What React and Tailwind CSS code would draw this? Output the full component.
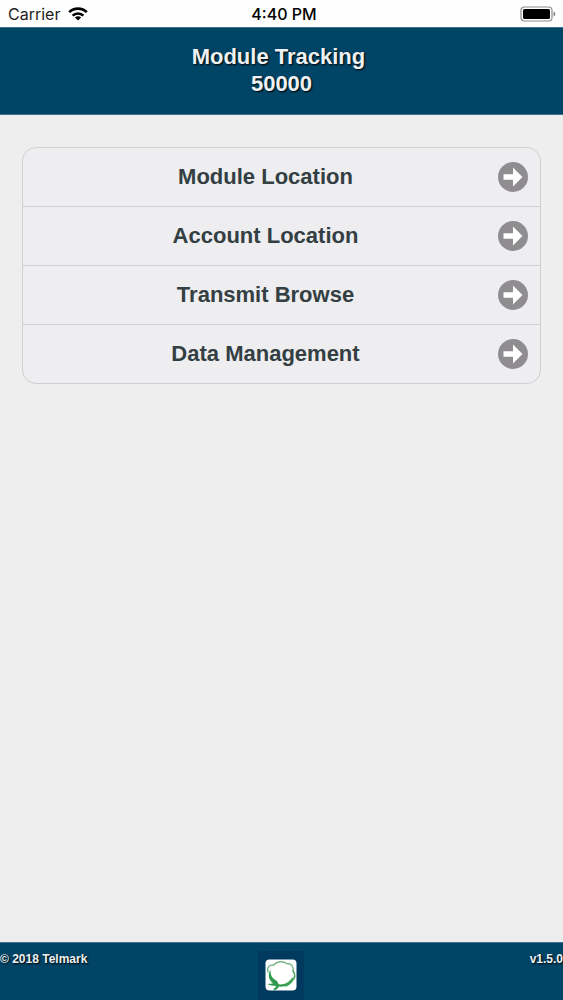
const menuItems = [
  { label: "Module Location", href: "#module-location" },
  { label: "Account Location", href: "#account-location" },
  { label: "Transmit Browse", href: "#transmit-browse" },
  { label: "Data Management", href: "#data-management" },
];

function WifiIcon() {
  return (
    <svg viewBox="0 0 20 14" className="h-[14px] w-[20px]" fill="none" stroke="#000" strokeWidth="2.6" aria-hidden="true">
      <path d="M1.2 5.2C6 0.4 14 0.4 18.8 5.2" />
      <path d="M4.6 8.6C7.6 5.7 12.4 5.7 15.4 8.6" />
      <path d="M10 13.6L6.9 10.5C8.6 8.9 11.4 8.9 13.1 10.5Z" fill="#000" stroke="none" />
    </svg>
  );
}

function BatteryIcon() {
  return (
    <svg viewBox="0 0 36 16" className="h-[16px] w-[36px]" aria-hidden="true">
      <rect x="1" y="1" width="31" height="14" rx="3.5" fill="#fff" stroke="#8c8c8c" strokeWidth="1.2" />
      <rect x="3" y="3" width="27" height="10" rx="1.5" fill="#000" />
      <path d="M33.6 5.5C35.8 6.4 35.8 9.6 33.6 10.5Z" fill="#777" />
    </svg>
  );
}

function ArrowIcon() {
  return (
    <svg viewBox="0 0 30 30" className="h-[30px] w-[30px] shrink-0" aria-hidden="true">
      <circle cx="15" cy="15" r="15" fill="#8f8d8f" />
      <path d="M5.5 12.2H15V5.5L24.5 15L15 24.5V17.8H5.5Z" fill="#fff" />
    </svg>
  );
}

function CottonLogo() {
  return (
    <svg viewBox="0 0 32 32" className="h-8 w-8" aria-hidden="true">
      <rect x="0.5" y="0.5" width="31" height="31" rx="4" fill="#fff" />
      <g fill="none" strokeLinecap="round">
        <path d="M3 13C1.5 8.5 4.5 5.5 9 6C11.5 2 18.5 1.8 21.5 4.5C26 4 29 7.5 28 12" stroke="#7ab588" strokeWidth="1.4" />
        <path d="M28 12C31 15.5 30 19.5 27 22" stroke="#4ba563" strokeWidth="1.6" />
      </g>
      <path d="M5.5 10.5C5.2 16.5 7.5 19.5 10.5 21C12.3 22 13 23.6 13.4 25.3C19 26 24 24 27 18.5C26.5 25 20.5 28.3 14 27.6C13 29.5 11.8 30.6 10 31.2L8 30C9.8 29.2 10.7 28.3 11.1 27C8.5 26.8 5 26.5 2.5 25C4.5 24.9 6.5 24.7 8.3 24.3C4 21.5 2.3 16 5.5 10.5Z" fill="#2f9a4c" />
      <path d="M18 26.5C22 24.5 26 22 28.5 17.5C28.5 21.5 27 25 22 27.2C20.5 27.6 19 27.3 18 26.5Z" fill="#3fa35a" />
    </svg>
  );
}

export default function App() {
  return (
    <div className="flex min-h-screen flex-col bg-[#efeeef] font-['Liberation_Sans',Arial,sans-serif]">
      <div className="grid h-[27px] grid-cols-3 items-center bg-[#fefefe] pr-[7px] pl-2 font-[Inter,sans-serif] text-base text-black">
        <div className="flex items-center gap-2">
          <span className="text-[#222]">Carrier</span>
          <WifiIcon />
        </div>
        <span className="pl-1 text-center font-medium">4:40 PM</span>
        <div className="flex justify-end">
          <BatteryIcon />
        </div>
      </div>

      <header className="border-y border-[#3f7190] bg-[#004466] pt-[15px] pb-[17px]">
        <h1 className="text-center text-[22px] leading-[27px] font-bold text-[#eef1f3] [text-shadow:1px_1px_2px_#000]">
          Module Tracking&nbsp;
          <br />
          50000
        </h1>
      </header>

      <main className="grow px-[22px] pt-8">
        <ul className="divide-y divide-[#d0cfd1] overflow-hidden rounded-[14px] border border-[#d0cfd1] bg-[#eeedef]">
          {menuItems.map((item) => (
            <li key={item.label}>
              <a href={item.href} className="flex h-[58px] items-center pr-3 pl-[10px] text-[22px] font-bold text-[#333f43]">
                <span className="grow pb-0.5 text-center">{item.label}</span>
                <ArrowIcon />
              </a>
            </li>
          ))}
        </ul>
      </main>

      <footer className="grid h-[58px] grid-cols-3 border-t border-[#3f7190] bg-[#004466] text-xs leading-[16px] font-bold text-[#eef1f3] [text-shadow:1px_1px_2px_#000]">
        <span className="pt-2">© 2018 Telmark</span>
        <div className="flex justify-center pt-2">
          <div className="flex w-[46px] items-start justify-center bg-[#003a5f] pt-2">
            <CottonLogo />
          </div>
        </div>
        <span className="pt-2 text-right">v1.5.0</span>
      </footer>
    </div>
  );
}
